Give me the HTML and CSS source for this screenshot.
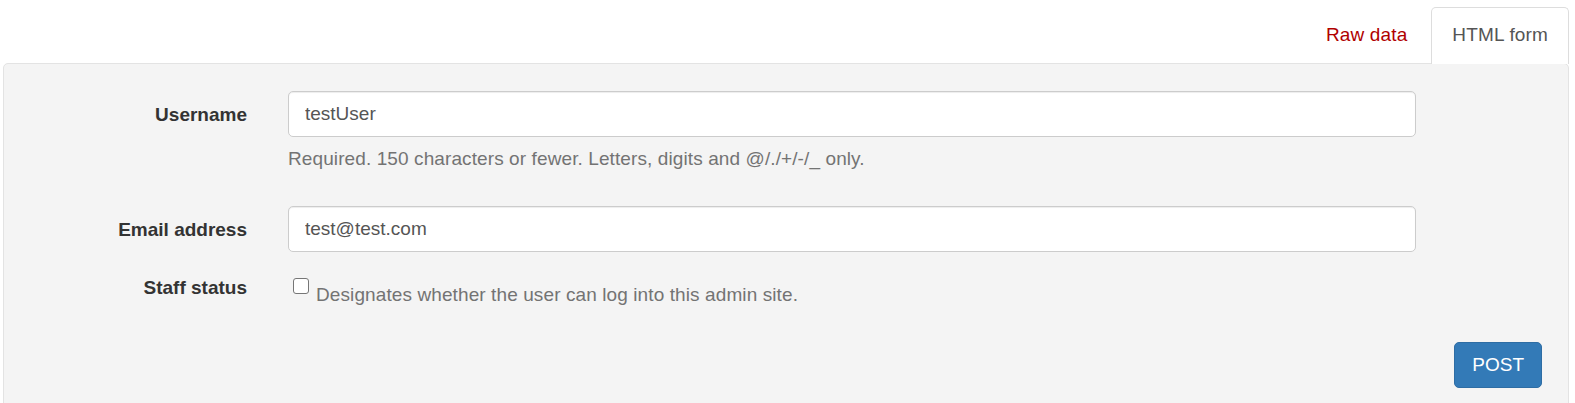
FILE: index.html
```html
<!DOCTYPE html>
<html lang="en">
<head>
<meta charset="utf-8">
<title>HTML form</title>
<link rel="stylesheet" href="styles.css">
</head>
<body>
<div class="page">
  <ul class="tabs">
    <li class="tab"><a href="#" class="tab-link">Raw data</a></li>
    <li class="tab tab-active"><a href="#" class="tab-link">HTML form</a></li>
  </ul>
  <div class="well">
    <form class="form">
      <div class="row row-username">
        <label class="label" for="username">Username</label>
        <div class="field">
          <input class="input" id="username" type="text" value="testUser">
          <span class="help">Required. 150 characters or fewer. Letters, digits and @/./+/-/_ only.</span>
        </div>
      </div>
      <div class="row row-email">
        <label class="label" for="email">Email address</label>
        <div class="field">
          <input class="input" id="email" type="email" value="test@test.com">
        </div>
      </div>
      <div class="row row-staff">
        <label class="label label-check" for="staff">Staff status</label>
        <div class="field field-check">
          <input class="checkbox" id="staff" type="checkbox">
          <span class="help help-check">Designates whether the user can log into this admin site.</span>
        </div>
      </div>
      <div class="actions">
        <button class="btn" type="button">POST</button>
      </div>
    </form>
  </div>
</div>
</body>
</html>
```

FILE: styles.css
```css
html, body {
  margin: 0;
  padding: 0;
  overflow: hidden;
  background: #ffffff;
}

body {
  font-family: "Liberation Sans", Arial, sans-serif;
  font-size: 19px;
  line-height: 27px;
  color: #333333;
}

.page {
  padding: 7px 6px 0 3px;
}

.tabs {
  list-style: none;
  margin: 0 0 -1px 0;
  padding: 0;
  display: flex;
  justify-content: flex-end;
  gap: 3px;
  position: relative;
  z-index: 1;
}

.tab-link {
  display: block;
  padding: 13px 20px 16px 20px;
  line-height: 27px;
  letter-spacing: 0.15px;
  text-decoration: none;
  color: #b00000;
  border: 1px solid transparent;
  border-bottom: none;
  border-radius: 5px 5px 0 0;
}

.tab-active .tab-link {
  color: #555555;
  background: #ffffff;
  border-color: #dddddd;
}

.well {
  background: #f4f4f4;
  border: 1px solid #e3e3e3;
  border-radius: 5px;
  padding: 0 26px 30px 0;
}

.row {
  display: grid;
  grid-template-columns: 243px 1128px;
  column-gap: 41px;
  align-items: start;
}

.row-username { padding-top: 27px; }
.row-email { margin-top: 34px; }
.row-staff { margin-top: 22px; }

.label {
  text-align: right;
  font-weight: bold;
  padding-top: 10px;
  color: #333333;
}

.label-check {
  padding-top: 0;
}

.field {
  display: flex;
  flex-direction: column;
}

.input {
  box-sizing: border-box;
  height: 46px;
  width: 100%;
  margin: 0;
  padding: 0 16px;
  font-family: inherit;
  font-size: 19px;
  color: #555555;
  background: #ffffff;
  border: 1px solid #cccccc;
  border-radius: 5px;
  box-shadow: inset 0 1px 1px rgba(0, 0, 0, 0.075);
  outline: none;
}

.help {
  display: block;
  margin-top: 8px;
  color: #737373;
  letter-spacing: 0.1px;
}

.field-check {
  flex-direction: row;
  align-items: flex-start;
}

.checkbox {
  appearance: none;
  -webkit-appearance: none;
  box-sizing: border-box;
  width: 16px;
  height: 16px;
  margin: 4px 0 0 5px;
  background: #ffffff;
  border: 1px solid #767676;
  border-radius: 3px;
  flex: none;
}

.help-check {
  margin: 0 0 0 7px;
  padding-top: 7px;
}

.actions {
  display: flex;
  justify-content: flex-end;
  margin-top: 34px;
}

.btn {
  box-sizing: border-box;
  height: 46px;
  padding: 0 17px;
  font-family: inherit;
  font-size: 19px;
  line-height: 44px;
  color: #ffffff;
  background: #337ab7;
  border: 1px solid #2e6da4;
  border-radius: 5px;
  cursor: pointer;
}
```
